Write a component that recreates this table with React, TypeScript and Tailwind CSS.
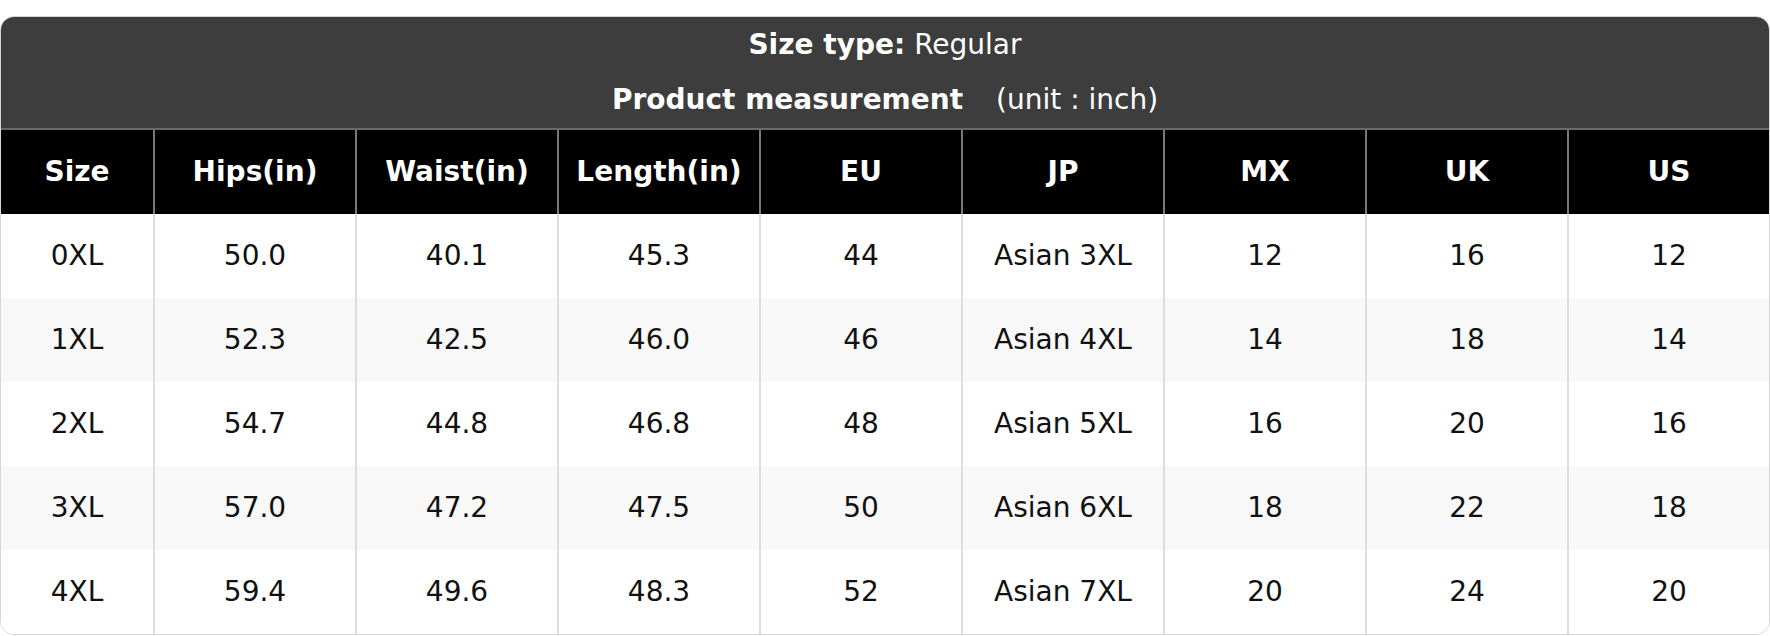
import React from "react";

const headers = ["Size", "Hips(in)", "Waist(in)", "Length(in)", "EU", "JP", "MX", "UK", "US"];
const rows = [
  ["0XL", "50.0", "40.1", "45.3", "44", "Asian 3XL", "12", "16", "12"],
  ["1XL", "52.3", "42.5", "46.0", "46", "Asian 4XL", "14", "18", "14"],
  ["2XL", "54.7", "44.8", "46.8", "48", "Asian 5XL", "16", "20", "16"],
  ["3XL", "57.0", "47.2", "47.5", "50", "Asian 6XL", "18", "22", "18"],
  ["4XL", "59.4", "49.6", "48.3", "52", "Asian 7XL", "20", "24", "20"],
];

export default function App() {
  return (
    <div className="w-[1770px] h-[636px] bg-white pt-[16px] font-['DejaVu_Sans',sans-serif] text-[28px]">
      <div className="border border-[#d6d6d6] rounded-[14px] overflow-hidden w-[1770px]">
        <div className="bg-[#3d3d3d] h-[111px] flex flex-col text-white">
          <div className="h-[55px] flex items-center justify-center">
            <span className="font-bold">Size type:</span>
            <span className="ml-[9px]">Regular</span>
          </div>
          <div className="h-[56px] flex items-center justify-center">
            <span className="font-bold">Product measurement</span>
            <span className="ml-[33px]">(unit : inch)</span>
          </div>
        </div>
        <div className="grid grid-cols-[152px_repeat(8,minmax(0,1fr))] bg-black border-t-2 border-[#6a6a6a]">
          {headers.map((h, i) => (
            <div
              key={h}
              className={`h-[84px] flex items-center justify-center text-white font-bold ${i > 0 ? "border-l-2 border-[#777777]" : ""}`}
            >
              {h}
            </div>
          ))}
        </div>
        {rows.map((r, ri) => (
          <div
            key={ri}
            className={`grid grid-cols-[152px_repeat(8,minmax(0,1fr))] ${ri % 2 === 1 ? "bg-[#f8f8f8]" : "bg-white"}`}
          >
            {r.map((c, ci) => (
              <div
                key={ci}
                className={`h-[84px] flex items-center justify-center text-[#111111] ${ci > 0 ? "border-l-2 border-[#dddddd]" : ""}`}
              >
                {c}
              </div>
            ))}
          </div>
        ))}
      </div>
    </div>
  );
}
